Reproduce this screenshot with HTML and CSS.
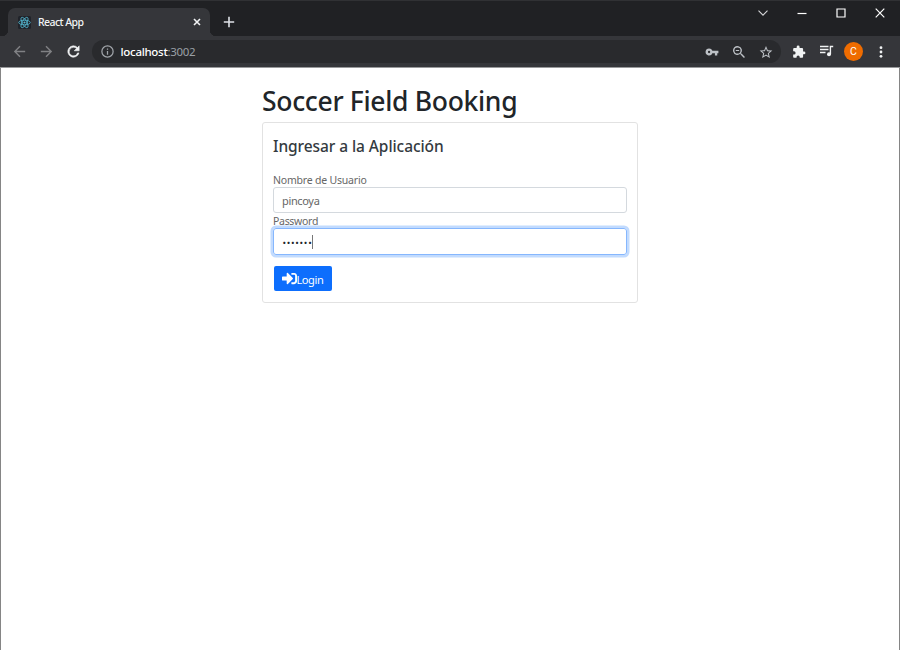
FILE: index.html
```html
<!DOCTYPE html>
<html lang="es">
<head>
<meta charset="utf-8">
<title>React App</title>
<link rel="stylesheet" href="styles.css">
</head>
<body>
<div class="window">
  <header class="tabstrip">
    <div class="tab">
      <svg class="favicon" viewBox="0 0 13 13"><rect width="13" height="13" rx="1.5" fill="#20232a"/><g fill="none" stroke="#53b6cf" stroke-width=".85"><ellipse cx="6.5" cy="6.5" rx="5.8" ry="2.300"/><ellipse cx="6.5" cy="6.5" rx="5.8" ry="2.300" transform="rotate(60 6.5 6.5)"/><ellipse cx="6.5" cy="6.5" rx="5.8" ry="2.300" transform="rotate(120 6.5 6.5)"/></g><circle cx="6.5" cy="6.5" r="1.100" fill="#53b6cf"/></svg>
      <span class="tab-title">React App</span>
      <svg class="tab-close" viewBox="0 0 8 8"><path d="M1 1l6 6M7 1L1 7" stroke="#f1f3f4" stroke-width="1.6"/></svg>
    </div>
    <svg class="new-tab" viewBox="0 0 12 12"><path d="M6 .8v10.400M.8 6h10.400" stroke="#dee1e6" stroke-width="1.600"/></svg>
    <div class="controls">
      <svg viewBox="0 0 12 12"><path d="M1.500 3.700L6 8.200l4.500-4.500" fill="none" stroke="#d5d6d8" stroke-width="1.100"/></svg>
      <svg viewBox="0 0 12 12"><path d="M1.500 6.500h9" stroke="#fff" stroke-width="1.200"/></svg>
      <svg viewBox="0 0 12 12"><path d="M2 2h8v8H2z" fill="none" stroke="#fff" stroke-width="1.200"/></svg>
      <svg viewBox="0 0 12 12"><path d="M1.700 1.700l8.600 8.600M10.300 1.700l-8.600 8.600" stroke="#fff" stroke-width="1.200"/></svg>
    </div>
  </header>
  <nav class="toolbar">
    <svg class="nav-icon dim" viewBox="0 0 24 24"><path d="M20 11H7.830l5.590-5.590L12 4l-8 8 8 8 1.410-1.410L7.830 13H20z"/></svg>
    <svg class="nav-icon dim" viewBox="0 0 24 24"><path d="M4 13h12.170l-5.590 5.590L12 20l8-8-8-8-1.410 1.410L16.170 11H4z"/></svg>
    <svg class="nav-icon reload" viewBox="0 0 24 24"><path d="M17.650 6.350A8 8 0 1 0 19.730 14h-2.080A6 6 0 1 1 12 6c1.660 0 3.140.69 4.220 1.780L13 11h7V4z"/></svg>
    <div class="omnibox">
      <svg class="info" viewBox="0 0 24 24"><path d="M11 17h2v-6h-2zm0-8h2V7h-2zm1-7a10 10 0 1 0 0 20 10 10 0 0 0 0-20zm0 18a8 8 0 1 1 0-16 8 8 0 0 1 0 16z"/></svg>
      <span class="url"><b>localhost</b><span>:3002</span></span>
      <div class="omni-actions">
        <svg viewBox="0 0 24 24"><path d="M12.650 10A5.990 5.990 0 0 0 7 6a6 6 0 1 0 5.650 8H17v4h4v-4h2v-4zM7 14a2 2 0 1 1 0-4 2 2 0 0 1 0 4z"/></svg>
        <svg viewBox="1.500 1.500 20.500 20.500"><path d="M15.500 14h-.79l-.28-.27A6.500 6.500 0 1 0 13.730 14.430l.27.280v.79l5 4.990L20.490 19zm-6 0a4.500 4.500 0 1 1 0-9 4.500 4.500 0 0 1 0 9zM7 8.800h5v1.500H7z"/></svg>
        <svg viewBox="1 .5 22 22"><path d="M22 9.240l-7.190-.62L12 2 9.190 8.630 2 9.240l5.460 4.730L5.820 21 12 17.270 18.180 21l-1.630-7.030zM12 15.400l-3.760 2.270 1-4.280-3.320-2.880 4.380-.38L12 6.100l1.710 4.040 4.380.38-3.320 2.880 1 4.280z"/></svg>
      </div>
    </div>
    <svg class="ext" viewBox="0 0 24 24"><path d="M20.500 11H19V7c0-1.100-.9-2-2-2h-4V3.500a2.500 2.500 0 0 0-5 0V5H4c-1.100 0-2 .9-2 2v3.800h1.500a2.700 2.700 0 0 1 0 5.400H2V20c0 1.100.9 2 2 2h3.800v-1.500a2.700 2.700 0 0 1 5.400 0V22H17c1.100 0 2-.9 2-2v-4h1.500a2.500 2.500 0 0 0 0-5z"/></svg>
    <svg class="media" viewBox="0 0 15 13"><path d="M1 1.500h8.500M1 4.500h8.500M1 7.500h5.500" stroke="#f1f3f4" stroke-width="1.400"/><path d="M11.400 9V1.500h2.800" fill="none" stroke="#f1f3f4" stroke-width="1.400"/><circle cx="10" cy="9.300" r="2" fill="#f1f3f4"/></svg>
    <span class="avatar">C</span>
    <svg class="menu" viewBox="0 0 4 12"><circle cx="2" cy="1.700" r="1.400"/><circle cx="2" cy="6" r="1.400"/><circle cx="2" cy="10.300" r="1.400"/></svg>
  </nav>
  <main class="page">
    <div class="container">
      <h1>Soccer Field Booking</h1>
      <section class="card">
        <h2>Ingresar a la Aplicación</h2>
        <div class="label">Nombre de Usuario</div>
        <div class="field">pincoya</div>
        <div class="label second">Password</div>
        <div class="field focused"><span class="dots">•••••••</span><i class="caret"></i></div>
        <div class="button"><svg viewBox="0 0 512 512"><path d="M416 448h-84c-6.600 0-12-5.400-12-12v-40c0-6.600 5.400-12 12-12h84c17.700 0 32-14.300 32-32V160c0-17.700-14.300-32-32-32h-84c-6.600 0-12-5.400-12-12V76c0-6.600 5.400-12 12-12h84c53 0 96 43 96 96v192c0 53-43 96-96 96zm-47-209L201 71c-15-15-41-4.500-41 17v96H24c-13.300 0-24 10.700-24 24v96c0 13.300 10.700 24 24 24h136v96c0 21.500 26 32 41 17l168-168c9.300-9.400 9.300-24.600 0-34z"/></svg><span>Login</span></div>
      </section>
    </div>
  </main>
</div>
</body>
</html>
```
FILE: styles.css
```css
* { box-sizing: border-box; }
body { margin: 0; background: #fff; font-family: "Noto Sans", "Open Sans", sans-serif; color: #212529; }
svg { display: block; flex: none; }
.window { height: 650px; display: flex; flex-direction: column; overflow: hidden; }
.tabstrip { height: 36px; flex: none; background: #202124; border-top: 1px solid #303134; display: flex; align-items: flex-start; }
.tab { width: 202px; height: 28px; margin: 7px 0 0 8px; padding: 0 9px 0 10px; background: #35363a; border-radius: 7px 7px 0 0; display: flex; align-items: center; position: relative; }
.tab::before, .tab::after { content: ""; position: absolute; bottom: 0; width: 6px; height: 6px; }
.tab::before { left: -6px; background: radial-gradient(circle at 0 0, #202124 6px, #35363a 6.500px); }
.tab::after { right: -6px; background: radial-gradient(circle at 100% 0, #202124 6px, #35363a 6.500px); }
.favicon { width: 13px; height: 13px; }
.tab-title { margin-left: 7px; font: 500 10.500px/14px "Noto Sans", sans-serif; letter-spacing: -.55px; color: #f1f3f4; }
.tab-close { width: 8px; height: 8px; margin-left: auto; }
.new-tab { width: 12px; height: 12px; margin: 15px 0 0 13px; }
.controls { display: flex; gap: 27px; margin: 6px 14px 0 auto; }
.controls svg { width: 12px; height: 12px; }
.toolbar { height: 32px; flex: none; background: #35363a; border-bottom: 1px solid #98999b; display: flex; align-items: center; padding-left: 11px; }
.nav-icon { width: 17px; height: 17px; margin-right: 10px; fill: #f1f3f4; }
.nav-icon.dim { fill: #808184; }
.nav-icon.reload { stroke: #f1f3f4; stroke-width: .8; }
.omnibox { width: 689px; height: 23px; border-radius: 12px; background: #292a2d; display: flex; align-items: center; padding: 0 8px 0 7.500px; }
.info { width: 15px; height: 15px; fill: #a1a5aa; }
.url { margin-left: 6px; font-size: 11.500px; line-height: 16px; color: #9aa0a6; letter-spacing: -.3px; }
.url b { font-weight: 500; color: #fff; }
.omni-actions { margin-left: auto; display: flex; gap: 13px; }
.omni-actions svg { width: 14px; height: 14px; fill: #bdc1c6; }
.ext { width: 14px; height: 14px; margin-left: 11px; fill: #f1f3f4; }
.media { width: 15px; height: 13px; margin-left: 13px; }
.avatar { width: 19px; height: 19px; margin-left: 10px; border-radius: 50%; background: #ef6c00; color: #fff; font: 10.500px/19px Roboto, sans-serif; text-align: center; }
.menu { width: 4px; height: 12px; margin-left: 16px; fill: #f1f3f4; }
.page { flex: 1; border-left: 1px solid #858585; border-right: 1px solid #858585; padding: 16px 261px 0; }
.container { width: 376px; }
h1 { margin: 0; height: 38px; font-size: 26.500px; font-weight: 500; line-height: 35px; letter-spacing: -.32px; white-space: nowrap; }
.card { height: 181px; border: 1px solid #e2e2e2; border-radius: 3px; padding: 13px 10px 0; }
h2 { margin: 0 0 23px; font-size: 15.500px; font-weight: 500; line-height: 20px; letter-spacing: -.08px; color: #343a40; white-space: nowrap; }
.label { height: 8px; font-size: 10.500px; line-height: 2px; letter-spacing: -.2px; color: #666; }
.field { height: 26px; border: 1px solid #d4d9de; border-radius: 3px; padding: 0 8px; display: flex; align-items: center; font-size: 11px; letter-spacing: -.35px; color: #666; }
.label.second { height: 15px; line-height: 17px; letter-spacing: -.3px; }
.focused { height: 27px; padding-left: 8.500px; border-color: #86b7fe; box-shadow: 0 0 0 2.500px #c2dbfe; color: #212529; }
.dots { font-size: 9.500px; letter-spacing: .7px; padding-top: 1px; }
.caret { width: 1px; height: 14px; background: #777; }
.button { width: 58px; height: 25px; margin: 11px 0 0 .5px; border-radius: 2px; background: #0d6efd; color: #fff; display: flex; align-items: center; padding-left: 8px; font-size: 11px; }
.button svg { width: 15px; height: 15px; fill: #fff; }
.button span { letter-spacing: -.4px; padding-top: 1px; }
```
